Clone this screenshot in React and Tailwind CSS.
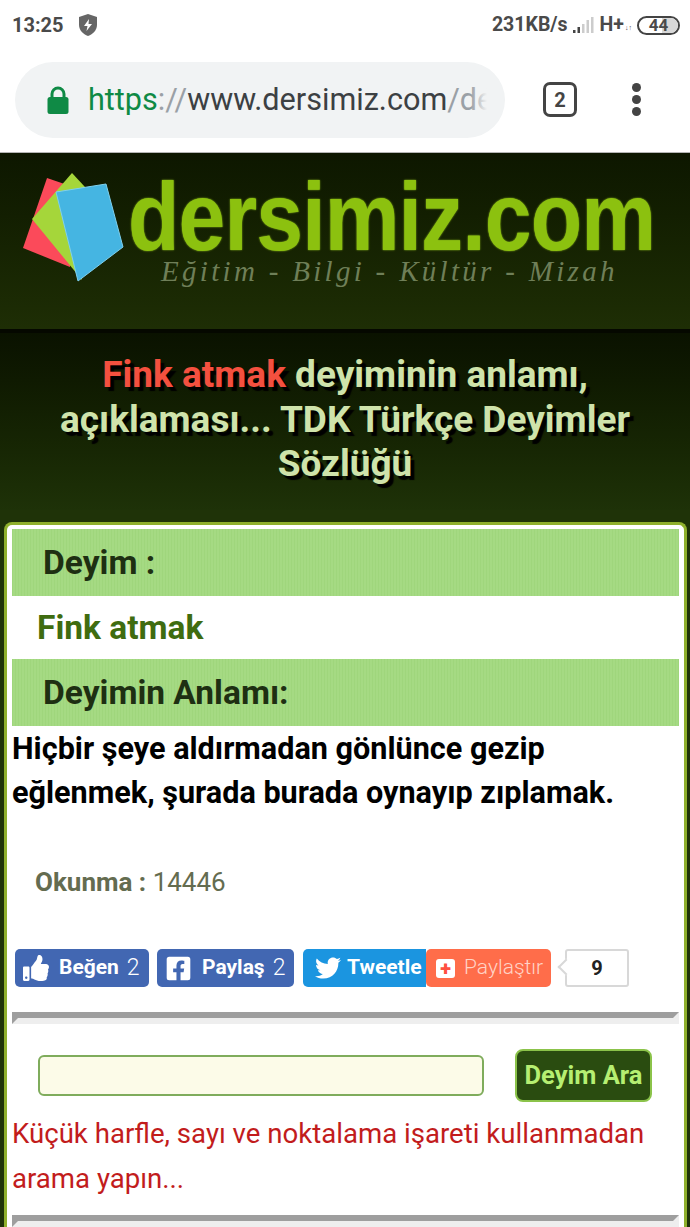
import React from "react";
import { FaThumbsUp, FaFacebookSquare, FaTwitter } from "react-icons/fa";

const dokuHeader =
  "h-[67px] flex items-center pl-[31px] pt-[1px] bg-[#a2d980] bg-[repeating-linear-gradient(90deg,#9fd67c_0px,#9fd67c_1px,#a5da83_1px,#a5da83_3px)] text-[33.5px] font-bold text-[#1e2f12]";

const StatusBar = () => (
  <div className="h-[50px] flex items-center justify-between pl-[12px] pr-[10px] bg-white text-[#4a4a4a] font-bold">
    <div className="flex items-center gap-[14px] text-[20px]">
      <span>13:25</span>
      <svg width="20" height="22" viewBox="0 0 20 22">
        <path d="M10 0 L19 3 V11 C19 16 15 20 10 22 C5 20 1 16 1 11 V3 Z" fill="#666" />
        <path d="M11 5 L6 12 H9.5 L8.5 17 L14 10 H10.5 Z" fill="#fff" />
      </svg>
    </div>
    <div className="flex items-center text-[19.5px]">
      <span>231KB/s</span>
      <svg width="24" height="18" viewBox="0 0 22 18" className="ml-[4px]">
        <rect x="0" y="14" width="2.5" height="3" fill="#444" />
        <rect x="4.5" y="11" width="2.5" height="6" fill="#444" />
        <rect x="9" y="8" width="2.5" height="9" fill="#ccc" />
        <rect x="13.5" y="4" width="2.5" height="13" fill="#ccc" />
        <rect x="18" y="1" width="2.5" height="16" fill="#ccc" />
      </svg>
      <span className="ml-[4px]">H+</span>
      <span className="text-[7px] ml-[1px] mt-[6px]">↓↑</span>
      <div className="relative ml-[5px] w-[43px] h-[19px] rounded-full border-2 border-[#444] overflow-hidden flex items-center justify-center text-[17px] leading-none">
        <div className="absolute right-0 top-0 bottom-0 w-[16px] bg-[#d8d8d8]" />
        <span className="relative">44</span>
      </div>
    </div>
  </div>
);

const Toolbar = () => (
  <div className="h-[103px] flex items-start pt-[12px] pl-[15px] bg-white border-b border-[#b5b5b5]">
    <div className="w-[490px] h-[76px] rounded-full bg-[#f1f3f4] flex items-center pl-[32px] pr-[18px] overflow-hidden">
      <svg width="22" height="28" viewBox="0 0 22 28" className="shrink-0">
        <path d="M5 12 V8 a6 6 0 0 1 12 0 V12" fill="none" stroke="#0f8a45" strokeWidth="3" />
        <rect x="0.5" y="11" width="21" height="17" rx="2.5" fill="#0f8a45" />
      </svg>
      <div className="relative ml-[19px] text-[30.6px] leading-none whitespace-nowrap overflow-hidden text-[#3c4043]">
        <span className="text-[#0f8a45]">https</span>
        <span className="text-[#9aa0a6]">://</span>
        <span>www.dersimiz.com</span>
        <span className="text-[#9aa0a6]">/de</span>
        <div className="absolute right-0 top-0 bottom-0 w-[16px] bg-gradient-to-r from-transparent to-[#f1f3f4]" />
      </div>
    </div>
    <div className="ml-[38px] mt-[20px] w-[34px] h-[35px] rounded-[7px] border-[3.5px] border-[#444] flex items-center justify-center text-[20px] font-bold text-[#444]">
      2
    </div>
    <div className="ml-[55px] mt-[21px] flex flex-col gap-[3px]">
      <div className="w-[9px] h-[9px] rounded-full bg-[#444]" />
      <div className="w-[9px] h-[9px] rounded-full bg-[#444]" />
      <div className="w-[9px] h-[9px] rounded-full bg-[#444]" />
    </div>
  </div>
);

const Logo = () => (
  <div className="h-[176px] flex items-start pl-[22px] overflow-hidden bg-gradient-to-b from-[#0d1700] to-[#1e2e05] font-['Liberation_Sans',sans-serif]">
    <svg width="104" height="112" viewBox="22 172 104 112" className="shrink-0 mt-[19px]">
      <polygon points="47,178 23,248 70,267 82,190" fill="#fb4a5a" />
      <polygon points="72,173 32,219 82,280 85,187" fill="#a5d63a" />
      <polygon points="56,192 106,184 123,247 78,281" fill="#45b5e2" stroke="#7fd0ee" strokeWidth="1" />
    </svg>
    <div className="flex flex-col ml-[2px]">
      <div className="mt-[19px] text-[97px] leading-[90px] font-bold tracking-[-1px] text-[#8cc10f] [text-shadow:0_0_2px_#9ed020] whitespace-nowrap origin-left scale-x-[0.867]">
        dersimiz.com
      </div>
      <div className="ml-[33px] -mt-[7px] font-['Liberation_Serif',serif] italic text-[29px] leading-[32px] tracking-[3.3px] whitespace-nowrap text-[#6f7f58]">
        Eğitim - Bilgi - Kültür - Mizah
      </div>
    </div>
  </div>
);

const Title = () => (
  <div className="h-[182px] pt-[20px] border-t-[4px] border-[#050800] bg-gradient-to-b from-[#0a1200] to-[#1e3208] text-center text-[37px] leading-[44.5px] font-bold text-[#cfe3ab] [text-shadow:4px_4px_1px_#000] px-[40px]">
    <span className="text-[#f4503f]">Fink atmak</span> deyiminin anlamı, açıklaması... TDK Türkçe Deyimler Sözlüğü
  </div>
);

const Hr = () => (
  <div className="h-[12px] border-[6px] border-t-[#9e9e9e] border-l-[#9e9e9e] border-r-[#eeeeee] border-b-[#eeeeee]" />
);

const ShareRow = () => (
  <div className="h-[38px] flex items-stretch ml-[3px] text-white text-[21px]">
    <div className="w-[134px] rounded-[5px] bg-[#4267b2] flex items-center pl-[8px]">
      <FaThumbsUp size={26} />
      <span className="ml-[10px] font-bold">Beğen</span>
      <span className="ml-[8px] font-light text-[23px]">2</span>
    </div>
    <div className="ml-[8px] w-[137px] rounded-[5px] bg-[#4267b2] flex items-center pl-[8px]">
      <FaFacebookSquare size={27} />
      <span className="ml-[10px] font-bold">Paylaş</span>
      <span className="ml-[8px] font-light text-[23px]">2</span>
    </div>
    <div className="ml-[9px] w-[123px] rounded-l-[5px] bg-[#1b95e0] flex items-center pl-[12px]">
      <FaTwitter size={26} />
      <span className="ml-[6px] font-bold">Tweetle</span>
    </div>
    <div className="w-[125px] rounded-[5px] bg-[#ff6d4a] flex items-center pl-[10px]">
      <div className="w-[19px] h-[19px] rounded-[3px] bg-white flex items-center justify-center text-[#ff5040] text-[20px] font-black leading-none">
        +
      </div>
      <span className="ml-[9px] font-light text-[#ffd3c6]">Paylaştır</span>
    </div>
    <div className="relative ml-[14px] w-[64px] rounded-[3px] border-2 border-[#d8d8d8] bg-white flex items-center justify-center text-[#222] text-[20px] font-bold">
      <div className="absolute -left-[7px] top-[10px] w-[12px] h-[12px] rotate-45 bg-white border-l-2 border-b-2 border-[#d8d8d8]" />
      9
    </div>
  </div>
);

export default function App() {
  return (
    <div className="h-[1227px] overflow-hidden bg-white font-['Roboto',sans-serif]">
      <StatusBar />
      <Toolbar />
      <Logo />
      <Title />
      <div className="bg-[#1f3308] pl-[4px] pr-[3px] pt-[12px] -mt-[1px]">
        <div className="rounded-t-[8px] border-x-[3px] border-t-[3px] border-[#8fb02c] bg-white px-[5px] pt-[4px] h-[720px]">
          <div className={dokuHeader}>Deyim :</div>
          <div className="h-[63px] flex items-center pl-[25px] pt-[1px] text-[33.5px] font-bold text-[#3f6c10]">Fink atmak</div>
          <div className={dokuHeader}>Deyimin Anlamı:</div>
          <div className="text-[30.6px] leading-[44px] font-bold text-black mt-[1px]">
            Hiçbir şeye aldırmadan gönlünce gezip eğlenmek, şurada burada oynayıp zıplamak.
          </div>
          <div className="mt-[51px] pl-[23px] text-[26px] leading-[32px] text-[#646c50]">
            <span className="font-bold">Okunma :</span> 14446
          </div>
          <div className="mt-[51px]">
            <ShareRow />
          </div>
          <div className="mt-[25px]">
            <Hr />
          </div>
          <div className="mt-[25px] flex items-center pl-[26px]">
            <input
              type="text"
              className="w-[446px] h-[41px] rounded-[6px] border-2 border-[#7fac5c] bg-[#fcfbe8]"
            />
            <button className="ml-[31px] w-[137px] h-[53px] rounded-[8px] border-2 border-[#8bc34a] bg-[#2a4c10] text-[25.5px] font-bold text-[#b6ef72]">
              Deyim Ara
            </button>
          </div>
          <div className="mt-[9px] text-[27.6px] leading-[45px] text-[#c21c1c]">
            Küçük harfle, sayı ve noktalama işareti kullanmadan arama yapın...
          </div>
          <div className="mt-[14px]">
            <Hr />
          </div>
        </div>
      </div>
    </div>
  );
}
